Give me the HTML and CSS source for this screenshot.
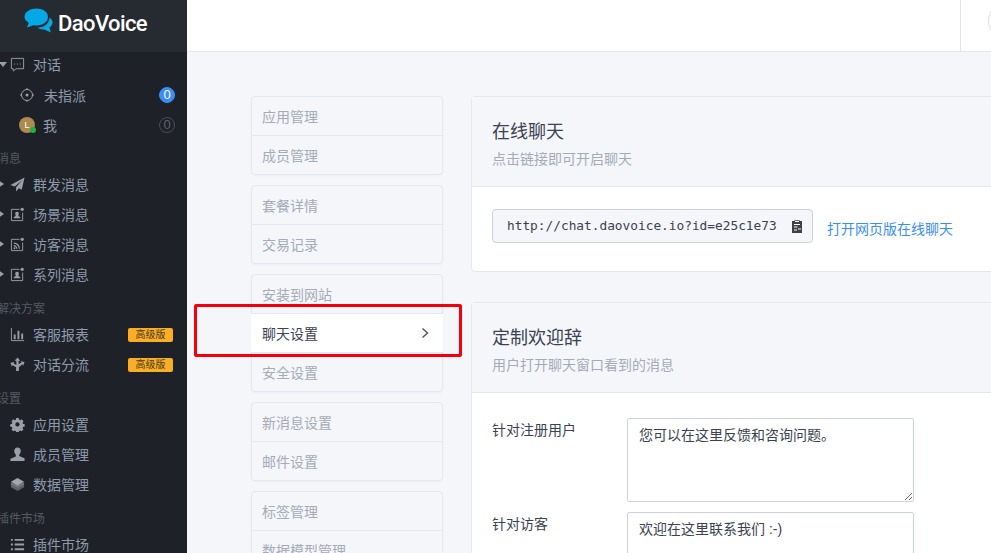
FILE: index.html
```html
<!DOCTYPE html>
<html lang="zh">
<head>
<meta charset="utf-8">
<title>DaoVoice</title>
<link rel="stylesheet" href="styles.css">
</head>
<body>
<div class="app">
  <aside class="sidebar">
    <div class="logo">
      <svg class="logo-icon" width="29" height="26" viewBox="0 0 29 26"><path fill="#03a9e6" d="M12.500.5c6.500 0 11.500 3.500 11.500 8.500 0 4.800-5 8.500-11.500 8.500-1 0-2-.1-3-.3L3 19.500l1.800-4.700C2.300 13.300.5 11.300.5 9 .5 4 6 .5 12.500.5z"/><path fill="#03a9e6" d="M25.500 9.500c1.800 1.300 3 3 3 5 0 2-1.200 3.700-3 4.900l1.300 5.100-6.500-3.100c-2.300.2-4.700-.2-6.500-1.300l-.2-.6c6.500.6 12-4.300 11.900-10z"/></svg>
      <span class="logo-text">DaoVoice</span>
    </div>
    <nav class="nav">
      <a class="item top"><i class="caret down"></i><svg class="ic" viewBox="0 0 16 16"><path fill="none" stroke="#9a9fa7" d="M1.500 1.500h13v11h-8l-3 2.500v-2.500h-2z"/><path stroke="#9a9fa7" stroke-dasharray="1 2" d="M4.500 7.500h7"/></svg><span>对话</span></a>
      <a class="item sub"><svg class="ic" viewBox="0 0 16 16"><circle cx="8" cy="8" r="5.500" fill="none" stroke="#9a9fa7"/><circle cx="8" cy="8" r="1.500" fill="#9a9fa7"/><path stroke="#9a9fa7" d="M8 1v2M8 13v2M1 8h2M13 8h2"/></svg><span>未指派</span><b class="count on">0</b></a>
      <a class="item sub me"><span class="avatar">L<i></i></span><span>我</span><b class="count">0</b></a>
      <h6 class="h1">消息</h6>
      <a class="item"><i class="caret"></i><svg class="ic" viewBox="0 0 16 16"><path fill="#9a9fa7" d="M15.500.5.500 8.500l4.500 1.500L13 3.500 6.500 11v4.500l3-3.500 3 1.500z"/></svg><span>群发消息</span></a>
      <a class="item"><i class="caret"></i><svg class="ic" viewBox="0 0 16 16"><path fill="none" stroke="#9a9fa7" d="M10 2.500H1.500v12h12V6"/><circle cx="13" cy="2.500" r="1.800" fill="#9a9fa7"/><path fill="#9a9fa7" d="M7.500 5a2 2 0 0 1 1.500 3.300V9.500l2 1.500v1H4v-1l2-1.500V8.300A2 2 0 0 1 7.500 5z"/></svg><span>场景消息</span></a>
      <a class="item"><i class="caret"></i><svg class="ic" viewBox="0 0 16 16"><path fill="none" stroke="#9a9fa7" d="M10 2.500H1.500v12h12V6"/><circle cx="13" cy="2.500" r="1.800" fill="#9a9fa7"/><path fill="none" stroke="#9a9fa7" stroke-width="1.300" d="M4 6.500a6 6 0 0 1 6 6M4 9.300a3.200 3.200 0 0 1 3.200 3.200"/><circle cx="4.700" cy="12" r="1" fill="#9a9fa7"/></svg><span>访客消息</span></a>
      <a class="item"><i class="caret"></i><svg class="ic" viewBox="0 0 16 16"><path fill="none" stroke="#9a9fa7" d="M10 2.500H1.500v12h12V6"/><circle cx="13" cy="2.500" r="1.800" fill="#9a9fa7"/><path fill="#9a9fa7" d="M7.500 5a2 2 0 0 1 1.500 3.300V9.500l2 1.500v1H4v-1l2-1.500V8.300A2 2 0 0 1 7.500 5z"/></svg><span>系列消息</span></a>
      <h6 class="h2">解决方案</h6>
      <a class="item"><svg class="ic" viewBox="0 0 16 16"><path fill="none" stroke="#9a9fa7" d="M1.500 1v13.500H15"/><path fill="#9a9fa7" d="M4 8h2v5H4zM8 4h2v9H8zM12 7h2v6h-2z"/></svg><span>客服报表</span><em class="tag">高级版</em></a>
      <a class="item"><svg class="ic" viewBox="0 0 16 16"><path fill="#9a9fa7" d="M8 .5 11 4H9.200v3.600l3-1.700-.9-1.500 4.200.8-1.500 4-.9-1.500L9.500 11v4h-3v-4L2.900 8.700 2 10.200.500 6.200l4.200-.8-.9 1.500 3 1.700V4H5z"/></svg><span>对话分流</span><em class="tag">高级版</em></a>
      <h6 class="h3">设置</h6>
      <a class="item"><svg class="ic" viewBox="0 0 16 16"><path fill="#9a9fa7" fill-rule="evenodd" d="M6.500 1h3l.4 2 1.300.6 1.800-1 2 2.100-1.100 1.700.5 1.300 2 .5v2.800l-2 .5-.5 1.300 1 1.700-2 2-1.700-1-1.300.5-.4 2h-3l-.4-2-1.300-.5-1.700 1-2-2 1-1.700-.5-1.300-2-.5V8.200l2-.5.5-1.300-1-1.700 2-2.100 1.700 1 1.300-.6zM8 6a2.500 2.500 0 1 0 0 5 2.500 2.500 0 0 0 0-5z" transform="matrix(.92 0 0 .92 .6 .1)"/></svg><span>应用设置</span></a>
      <a class="item"><svg class="ic" viewBox="0 0 16 16"><path fill="#9a9fa7" d="M8 .5c2.200 0 3.500 1.700 3.500 3.800 0 1.600-.7 3-1.700 3.800v1.400l5.700 2.500V15H.500v-2.500l5.700-2.500V8.100C5.200 7.300 4.500 5.900 4.500 4.300 4.500 2.200 5.800.500 8 .5z"/></svg><span>成员管理</span></a>
      <a class="item"><svg class="ic" viewBox="0 0 16 16"><path fill="#5c616a" d="m8 9-7-3v5l7 4 7-4V6z"/><path fill="#73787f" d="M8 8.500 1 5.500V8l7 3.500L15 8V5.500z"/><path fill="#a2a7ae" d="M8 1 1 5l7 4 7-4z"/></svg><span>数据管理</span></a>
      <h6 class="h3">插件市场</h6>
      <a class="item"><svg class="ic" viewBox="0 0 16 16"><path fill="#9a9fa7" d="M1 2h2v2H1zM5 2h10v2H5zM1 7h2v2H1zM5 7h10v2H5zM1 12h2v2H1zM5 12h10v2H5z"/></svg><span>插件市场</span></a>
    </nav>
  </aside>
  <div class="content">
    <header class="topbar"><div class="user"><i class="ring"></i></div></header>
    <main class="main">
      <div class="menu">
        <ul class="card"><li>应用管理</li><li>成员管理</li></ul>
        <ul class="card"><li>套餐详情</li><li>交易记录</li></ul>
        <ul class="card"><li>安装到网站</li><li class="active">聊天设置<svg width="8" height="12" viewBox="0 0 8 12"><path fill="none" stroke="#4b5563" stroke-width="1.400" d="m1.500 1.500 5 4.500-5 4.500"/></svg></li><li>安全设置</li></ul>
        <ul class="card"><li>新消息设置</li><li>邮件设置</li></ul>
        <ul class="card"><li>标签管理</li><li>数据模型管理</li></ul>
      </div>
      <div class="panels">
        <section class="panel">
          <div class="panel-head"><h2>在线聊天</h2><p>点击链接即可开启聊天</p></div>
          <div class="panel-body link-row">
            <div class="url"><code>http://chat.daovoice.io?id=e25c1e73</code><svg width="10" height="13" viewBox="0 0 10 13"><path fill="#3c3f44" d="M0 1h2.500V0h5v1H10v12H0z"/><path fill="#fff" d="M3 .8h4v1.200H3zM2 4h6v1H2zM2 6.500h3.500v1H2zM6 8.500h3v1H6zM2 9.500h3v1H2z"/></svg></div>
            <a class="open">打开网页版在线聊天</a>
          </div>
        </section>
        <section class="panel">
          <div class="panel-head"><h2>定制欢迎辞</h2><p>用户打开聊天窗口看到的消息</p></div>
          <div class="panel-body form">
            <label>针对注册用户</label><textarea class="ta1">您可以在这里反馈和咨询问题。</textarea>
            <label>针对访客</label><textarea class="ta1">欢迎在这里联系我们 :-)</textarea>
          </div>
        </section>
      </div>
    </main>
  </div>
</div>
<div class="highlight"></div>
</body>
</html>
```

FILE: styles.css
```css
* { box-sizing: border-box; }
html, body { margin: 0; height: 100%; overflow: hidden; }
body { font-family: "Liberation Sans", "Noto Sans CJK SC", sans-serif; font-size: 14px; color: #3a4150; background: #f5f6fa; }
.app { display: flex; width: 991px; height: 553px; overflow: hidden; }

.sidebar { flex: 0 0 187px; background: #1f2128; overflow: hidden; }
.logo { height: 52px; background: #262a31; display: flex; align-items: center; padding-left: 24px; gap: 5px; }
.logo-icon { margin-top: -10px; flex: none; }
.logo-text { font-family: "Roboto", sans-serif; font-weight: 500; font-size: 22px; letter-spacing: -.6px; color: #fff; margin-top: -6px; }
.nav { display: flex; flex-direction: column; }
.item { height: 30px; display: flex; align-items: center; padding-left: 10px; color: #8c9bac; position: relative; flex: none; }
.item .ic { width: 15px; height: 15px; margin-right: 8px; flex: none; }
.item.top { height: 24px; margin-bottom: 4px; }
.item.sub { padding-left: 19px; }
.item.sub .ic { margin-right: 9px; width: 16px; height: 16px; }
.item.sub.me > span:nth-child(2) { margin-left: 8px; }
.caret { position: absolute; left: -2px; top: 11px; border-left: 6px solid #9aa0a8; border-top: 4px solid transparent; border-bottom: 4px solid transparent; }
.caret.down { left: -1px; top: 10px; border: 0; border-top: 5px solid #9aa0a8; border-left: 4px solid transparent; border-right: 4px solid transparent; }
.count { position: absolute; right: 12px; top: 7px; width: 16px; height: 16px; border-radius: 50%; border: 1px solid #4a4e56; color: #5d636c; font-weight: 400; font-size: 13px; line-height: 14px; text-align: center; }
.count.on { background: #3a8ef6; border-color: #3a8ef6; color: #fff; }
.avatar { width: 16px; height: 16px; border-radius: 50%; background: #ad8a50; color: #fff; font-size: 9px; line-height: 16px; text-align: center; position: relative; flex: none; }
.avatar i { position: absolute; right: -1px; bottom: 0; width: 6px; height: 6px; border-radius: 50%; background: #1fb141; }
.tag { position: absolute; left: 128px; top: 9px; width: 45px; height: 14px; border-radius: 2px; background: #f9ae26; color: #4a3a1a; font-style: normal; font-size: 10px; line-height: 14px; text-align: center; }
h6 { margin: 0 0 0 -3px; font-weight: 400; font-size: 12px; color: #555a63; flex: none; white-space: nowrap; }
.h1 { height: 29px; line-height: 38px; }
.h2 { height: 30px; line-height: 40px; }
.h3 { height: 30px; line-height: 40px; }

.content { flex: 1; min-width: 0; display: flex; flex-direction: column; }
.topbar { flex: 0 0 52px; background: #fff; border-bottom: 1px solid #e4e6ec; display: flex; justify-content: flex-end; }
.user { width: 31px; border-left: 1px solid #e2e3e8; padding: 1px 0 0 27px; overflow: hidden; }
.ring { display: block; width: 40px; height: 40px; border: 1px solid #dcdfe6; border-radius: 50%; }
.main { display: flex; gap: 28px; padding: 44px 0 0 64px; align-items: flex-start; }

.menu { flex: 0 0 192px; display: flex; flex-direction: column; gap: 10px; }
.card { list-style: none; margin: 0; padding: 0; border: 1px solid #e6e8ef; border-radius: 4px; background: #f5f6fa; box-shadow: 0 1px 2px rgba(30, 40, 70, .04); }
.card li { height: 39px; padding: 10px 0 0 10px; line-height: 20px; color: #a4abb7; border-top: 1px solid #e6e8ef; display: flex; align-items: flex-start; justify-content: space-between; }
.card li:first-child { height: 38px; border-top: 0; }
.card li.active { background: #fff; color: #3a4150; margin: 0 -1px; padding: 10px 14px 0 11px; }
.card li.active svg { margin-top: 3px; }

.panels { flex: 0 0 560px; display: flex; flex-direction: column; gap: 30px; }
.panel { background: #fff; border: 1px solid #e6e8ef; border-radius: 4px 0 0 4px; }
.panel-head { height: 90px; padding: 23px 20px 0; background: #f5f6fa; border-bottom: 1px solid #e6e8ef; }
.panel-head h2 { margin: 0; font-size: 18px; font-weight: 400; line-height: 24px; color: #3a4150; }
.panel-head p { margin: 6px 0 0; font-size: 14px; line-height: 18px; color: #a4abb7; }
.link-row { height: 84px; padding: 22px 20px 0; display: flex; align-items: flex-start; gap: 14px; }
.url { width: 321px; height: 34px; background: #f5f6fa; border: 1px solid #cdd1dc; border-radius: 4px; display: flex; align-items: center; justify-content: space-between; padding: 0 10px 0 14px; }
.url code { font-family: "DejaVu Sans Mono", monospace; font-size: 12.800px; color: #3a4150; margin-top: -2px; }
.open { color: #3a8ef6; margin-top: 9px; font-size: 14px; }
.form { display: grid; grid-template-columns: 135px 287px; row-gap: 10px; padding: 25px 20px 0; }
.form label { line-height: 24px; }
.ta1 { display: block; width: 287px; height: 84px; padding: 6px 11px; border: 1px solid #cdd1dc; border-radius: 2px; font: 14px/20px "Liberation Sans", "Noto Sans CJK SC", sans-serif; color: #3a4150; background: #fff; margin: 0; }

.highlight { position: absolute; left: 194px; top: 304px; width: 268px; height: 53px; border: 3px solid #f5000a; border-radius: 2px; }
```
